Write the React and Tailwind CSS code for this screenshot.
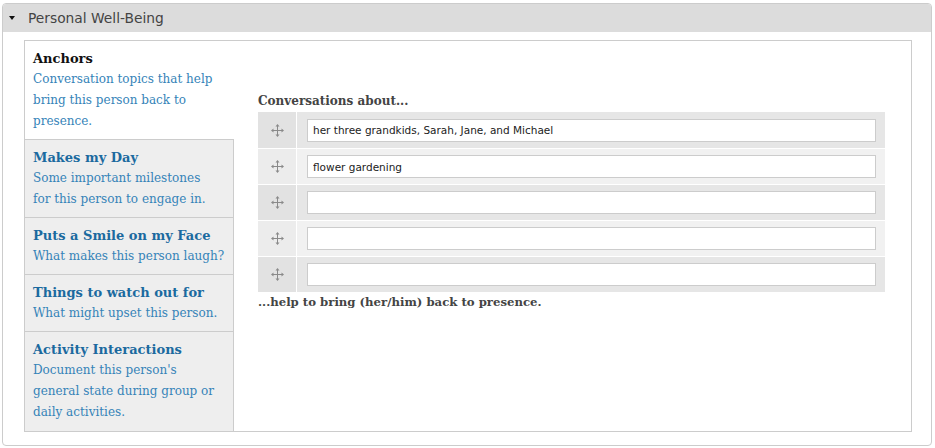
const tabs = [
  {
    title: 'Anchors',
    lines: ['Conversation topics that help', 'bring this person back to', 'presence.'],
    active: true,
  },
  { title: 'Makes my Day', lines: ['Some important milestones', 'for this person to engage in.'] },
  { title: 'Puts a Smile on my Face', lines: ['What makes this person laugh?'] },
  { title: 'Things to watch out for', lines: ['What might upset this person.'] },
  {
    title: 'Activity Interactions',
    lines: ["Document this person's", 'general state during group or', 'daily activities.'],
  },
]

const rows = ['her three grandkids, Sarah, Jane, and Michael', 'flower gardening', '', '', '']

const serif = { fontFamily: '"DejaVu Serif", serif' }

const Handle = () => (
  <svg width="13" height="13" viewBox="0 0 13 13" fill="#8a8a8a">
    <rect x="6" y="2" width="1" height="9" />
    <rect x="2" y="6" width="9" height="1" />
    <path d="M6.5 0 L8.5 2.5 L4.5 2.5 Z" />
    <path d="M6.5 13 L8.5 10.5 L4.5 10.5 Z" />
    <path d="M0 6.5 L2.5 4.5 L2.5 8.5 Z" />
    <path d="M13 6.5 L10.5 4.5 L10.5 8.5 Z" />
  </svg>
)

export default function App() {
  return (
    <div className="w-[935px] h-[448px] bg-white pt-[3px] pl-[2px]">
      <div className="w-[930px] h-[443px] rounded-[4px] border border-[#cccccc] flex flex-col overflow-hidden">
        {/* legend bar */}
        <div
          className="h-[28px] shrink-0 bg-[#dcdcdc] flex items-center text-[13.8px] text-[#444]"
          style={{ fontFamily: '"DejaVu Sans", sans-serif' }}
        >
          <span className="ml-[6px] w-0 h-0 border-x-[3.5px] border-x-transparent border-t-[4px] border-t-[#111]" />
          <span className="ml-[13px]">Personal Well-Being</span>
        </div>

        <div className="flex-1 pt-[8px] pl-[21px] pr-[19px] pb-[13px] flex">
          <div className="flex-1 border border-[#cccccc] flex" style={serif}>
            {/* vertical tabs */}
            <ul className="w-[209px] shrink-0 flex flex-col bg-[#eeeeee]">
              {tabs.map((tab, i) => (
                <li
                  key={i}
                  className={
                    'px-[8px] py-[7px] text-[12px] leading-[21px] ' +
                    (tab.active
                      ? 'bg-white border-b border-[#cccccc]'
                      : 'border-r border-[#cccccc] ' +
                        (i === tabs.length - 1 ? 'flex-1' : 'border-b'))
                  }
                >
                  <div
                    className={
                      'font-bold text-[13px] ' + (tab.active ? 'text-[#111]' : 'text-[#1b6a9f]')
                    }
                  >
                    {tab.title}
                  </div>
                  {tab.lines.map((l, j) => (
                    <div key={j} className="text-[#3583b8] whitespace-nowrap">
                      {l}
                    </div>
                  ))}
                </li>
              ))}
            </ul>

            {/* pane */}
            <div className="flex-1 pl-[24px] pt-[52px]">
              <div className="font-bold text-[12px] leading-[16px] text-[#444] mb-[3px]">
                Conversations about...
              </div>
              <div className="w-[627px] flex flex-col">
                {rows.map((val, i) => (
                  <div
                    key={i}
                    className={'flex h-[36px] ' + (i > 0 ? 'border-t border-white' : '')}
                  >
                    <div
                      className={
                        'w-[39px] flex items-center justify-center border-r border-white ' +
                        (i % 2 === 0 ? 'bg-[#e2e2e2]' : 'bg-[#ececec]')
                      }
                    >
                      <Handle />
                    </div>
                    <div
                      className={
                        'flex-1 flex items-center pl-[10px] pr-[9px] ' +
                        (i % 2 === 0 ? 'bg-[#e6e6e6]' : 'bg-[#f1f1f1]')
                      }
                    >
                      <input
                        readOnly
                        value={val}
                        className="w-full h-[23px] bg-white border border-[#cccccc] px-[5px] text-[10.5px] text-[#222] outline-none"
                        style={{ fontFamily: '"DejaVu Sans", sans-serif' }}
                      />
                    </div>
                  </div>
                ))}
              </div>
              <div className="font-bold text-[11.7px] leading-[16px] text-[#444] mt-[2px]">
                ...help to bring (her/him) back to presence.
              </div>
            </div>
          </div>
        </div>
      </div>
    </div>
  )
}
